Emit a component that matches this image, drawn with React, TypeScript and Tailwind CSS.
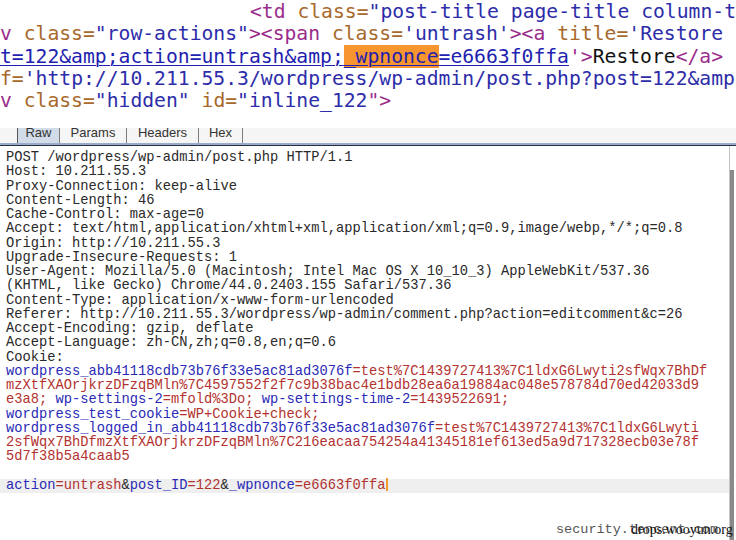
const tag = "text-[#9a2d8c]";
const attr = "text-[#a8692c]";
const val = "text-[#2d2daa]";

const blue = "text-[#2a2ab6]";
const red = "text-[#b3322f]";

function Tabs() {
  const tabs = [
    { name: "Raw", w: "w-[43px]", on: true },
    { name: "Params", w: "w-[67px]", on: false },
    { name: "Headers", w: "w-[72px]", on: false },
    { name: "Hex", w: "w-[44px]", on: false },
  ];
  return (
    <div className="h-[15px] bg-[#f5f5f5] flex pl-[17px] overflow-hidden font-['Liberation_Sans',Arial,sans-serif] text-[13px] text-[#333]">
      {tabs.map((t) => (
        <div
          key={t.name}
          className={`${t.w} h-[15px] flex justify-center items-start leading-[13px] border-r border-[#7d7d7d] ${
            t.on ? "bg-[#d2dce8] border-l border-l-[#555]" : ""
          }`}
        >
          <span className="-mt-[2px]">{t.name}</span>
        </div>
      ))}
    </div>
  );
}

export default function App() {
  return (
    <div className="w-[736px] h-[540px] bg-white relative overflow-hidden">
      {/* view-source snippet */}
      <div className="h-[128px] pt-[1px] font-['DejaVu_Sans_Mono',monospace] text-[19.7px] leading-[22.3px] whitespace-pre overflow-hidden">
        <div className="pl-[250px]">
          <span className={tag}>&lt;td</span>
          <span className={attr}> class=</span>
          <span className={val}>"post-title page-title column-t</span>
        </div>
        <div>
          <span className={tag}>v</span>
          <span className={attr}> class=</span>
          <span className={val}>"row-actions"</span>
          <span className={tag}>&gt;&lt;span</span>
          <span className={attr}> class=</span>
          <span className={val}>'untrash'</span>
          <span className={tag}>&gt;&lt;a</span>
          <span className={attr}> title=</span>
          <span className={val}>'Restore</span>
        </div>
        <div>
          <span className="text-[#1f1fb0] underline decoration-1 underline-offset-2">
            t=122&amp;amp;action=untrash&amp;amp;
            <span className="bg-[#f7952e]">_wpnonce</span>
            =e6663f0ffa
          </span>
          <span className={tag}>'&gt;</span>
          <span className="text-[#111]">Restore</span>
          <span className={tag}>&lt;/a&gt;</span>
        </div>
        <div>
          <span className={attr}>f=</span>
          <span className={val}>'http://10.211.55.3/wordpress/wp-admin/post.php?post=122&amp;amp</span>
        </div>
        <div>
          <span className={tag}>v</span>
          <span className={attr}> class=</span>
          <span className={val}>"hidden"</span>
          <span className={attr}> id=</span>
          <span className={val}>"inline_122</span>
          <span className={tag}>"&gt;</span>
        </div>
      </div>

      <Tabs />
      <div className="h-[2px] bg-[#9aaccb]" />
      <div className="h-[1px] bg-[#26303f]" />

      {/* request editor */}
      <div className="flex h-[394px]">
        <div className="flex-1 pt-[5px] font-['Liberation_Mono','Courier_New',monospace] text-[13.75px] leading-[14.25px] text-[#2a2a2a] whitespace-pre overflow-hidden">
          <div className="pl-[6px]">POST /wordpress/wp-admin/post.php HTTP/1.1</div>
          <div className="pl-[6px]">Host: 10.211.55.3</div>
          <div className="pl-[6px]">Proxy-Connection: keep-alive</div>
          <div className="pl-[6px]">Content-Length: 46</div>
          <div className="pl-[6px]">Cache-Control: max-age=0</div>
          <div className="pl-[6px]">Accept: text/html,application/xhtml+xml,application/xml;q=0.9,image/webp,*/*;q=0.8</div>
          <div className="pl-[6px]">Origin: http://10.211.55.3</div>
          <div className="pl-[6px]">Upgrade-Insecure-Requests: 1</div>
          <div className="pl-[6px]">User-Agent: Mozilla/5.0 (Macintosh; Intel Mac OS X 10_10_3) AppleWebKit/537.36</div>
          <div className="pl-[6px]">(KHTML, like Gecko) Chrome/44.0.2403.155 Safari/537.36</div>
          <div className="pl-[6px]">Content-Type: application/x-www-form-urlencoded</div>
          <div className="pl-[6px]">Referer: http://10.211.55.3/wordpress/wp-admin/comment.php?action=editcomment&amp;c=26</div>
          <div className="pl-[6px]">Accept-Encoding: gzip, deflate</div>
          <div className="pl-[6px]">Accept-Language: zh-CN,zh;q=0.8,en;q=0.6</div>
          <div className="pl-[6px]">Cookie:</div>
          <div className="pl-[6px]">
            <span className={blue}>wordpress_abb41118cdb73b76f33e5ac81ad3076f</span>
            <span className={red}>=test%7C1439727413%7C1ldxG6Lwyti2sfWqx7BhDf</span>
          </div>
          <div className="pl-[6px]">
            <span className={red}>mzXtfXAOrjkrzDFzqBMln%7C4597552f2f7c9b38bac4e1bdb28ea6a19884ac048e578784d70ed42033d9</span>
          </div>
          <div className="pl-[6px]">
            <span className={red}>e3a8;</span>
            <span className={blue}> wp-settings-2</span>
            <span className={red}>=mfold%3Do;</span>
            <span className={blue}> wp-settings-time-2</span>
            <span className={red}>=1439522691;</span>
          </div>
          <div className="pl-[6px]">
            <span className={blue}>wordpress_test_cookie</span>
            <span className={red}>=WP+Cookie+check;</span>
          </div>
          <div className="pl-[6px]">
            <span className={blue}>wordpress_logged_in_abb41118cdb73b76f33e5ac81ad3076f</span>
            <span className={red}>=test%7C1439727413%7C1ldxG6Lwyti</span>
          </div>
          <div className="pl-[6px]">
            <span className={red}>2sfWqx7BhDfmzXtfXAOrjkrzDFzqBMln%7C216eacaa754254a41345181ef613ed5a9d717328ecb03e78f</span>
          </div>
          <div className="pl-[6px]">
            <span className={red}>5d7f38b5a4caab5</span>
          </div>
          <div className="pl-[6px]"> </div>
          <div className="pl-[6px] bg-[#efefef]">
            <span className={blue}>action</span>
            <span className={red}>=untrash</span>
            <span>&amp;</span>
            <span className={blue}>post_ID</span>
            <span className={red}>=122</span>
            <span>&amp;</span>
            <span className={blue}>_wpnonce</span>
            <span className={red}>=e6663f0ffa</span>
            <span className="inline-block w-[2px] h-[13px] bg-[#f39a2c] align-middle -mt-[2px]" />
          </div>
        </div>
        <div className="w-[7px] border-l border-[#c4c4c4] flex flex-col">
          <div className="h-[24px]" />
          <div className="flex-1 w-[4px] bg-[#8a8a8a]" />
        </div>
      </div>

      {/* watermark */}
      <div className="absolute left-[556px] top-[522px] font-['Liberation_Mono',monospace] text-[13.5px] leading-[16px] text-[#555] whitespace-nowrap">
        security.tencent.com
      </div>
      <div className="absolute left-[631px] top-[522px] font-['Liberation_Serif',serif] text-[14px] leading-[16px] text-[#111] whitespace-nowrap">
        drops.wooyun.org
      </div>
    </div>
  );
}
